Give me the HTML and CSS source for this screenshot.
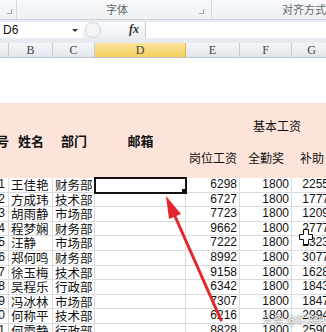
FILE: index.html
```html
<!DOCTYPE html>
<html lang="zh-CN">
<head>
    <meta charset="UTF-8">
    <title>工资表</title>
    <link rel="stylesheet" href="styles.css">
</head>
<body>
    <div class="ribbon">
        <div class="grp grp-clip"><span class="launch"></span></div>
        <div class="grp grp-font"><span class="grp-label">字体</span><span class="launch"></span></div>
        <div class="grp grp-align"><span class="grp-label">对齐方式</span></div>
    </div>

    <div class="fbar">
        <div class="namebox">D6<span class="drop"></span></div>
        <div class="fbtns"><span class="oval"></span><span class="fx">fx</span></div>
        <div class="finput"></div>
    </div>

    <div class="colhead">
        <div class="ch"></div>
        <div class="ch">B</div>
        <div class="ch">C</div>
        <div class="ch active">D</div>
        <div class="ch">E</div>
        <div class="ch">F</div>
        <div class="ch">G</div>
        <div class="ch">H</div>
    </div>

    <div class="sheet">
        <div class="title"></div>

        <div class="hd hd-a">序号</div>
        <div class="hd hd-b">姓名</div>
        <div class="hd hd-c">部门</div>
        <div class="hd hd-d">邮箱</div>
        <div class="hd-group">基本工资</div>
        <div class="hd-sub">岗位工资</div>
        <div class="hd-sub">全勤奖</div>
        <div class="hd-sub">补助</div>
        <div class="hd-sub"></div>

        <div class="c no">1</div><div class="c">王佳艳</div><div class="c">财务部</div><div class="c sel"></div><div class="c num">6298</div><div class="c num">1800</div><div class="c num">2255</div><div class="c"></div>
        <div class="c no">2</div><div class="c">方成玮</div><div class="c">技术部</div><div class="c"></div><div class="c num">6727</div><div class="c num">1800</div><div class="c num">1777</div><div class="c"></div>
        <div class="c no">3</div><div class="c">胡雨静</div><div class="c">市场部</div><div class="c"></div><div class="c num">7723</div><div class="c num">1800</div><div class="c num">1209</div><div class="c"></div>
        <div class="c no">4</div><div class="c">程梦娴</div><div class="c">财务部</div><div class="c"></div><div class="c num">9662</div><div class="c num">1800</div><div class="c num">2777</div><div class="c"></div>
        <div class="c no">5</div><div class="c">汪静</div><div class="c">市场部</div><div class="c"></div><div class="c num">7222</div><div class="c num">1800</div><div class="c num">2323</div><div class="c"></div>
        <div class="c no">6</div><div class="c">郑何鸣</div><div class="c">财务部</div><div class="c"></div><div class="c num">8992</div><div class="c num">1800</div><div class="c num">3077</div><div class="c"></div>
        <div class="c no">7</div><div class="c">徐玉梅</div><div class="c">技术部</div><div class="c"></div><div class="c num">9158</div><div class="c num">1800</div><div class="c num">1628</div><div class="c"></div>
        <div class="c no">8</div><div class="c">吴程乐</div><div class="c">行政部</div><div class="c"></div><div class="c num">6342</div><div class="c num">1800</div><div class="c num">1843</div><div class="c"></div>
        <div class="c no">9</div><div class="c">冯冰林</div><div class="c">市场部</div><div class="c"></div><div class="c num">7307</div><div class="c num">1800</div><div class="c num">1847</div><div class="c"></div>
        <div class="c no">10</div><div class="c">何称平</div><div class="c">技术部</div><div class="c"></div><div class="c num">6216</div><div class="c num">1800</div><div class="c num">2994</div><div class="c"></div>
        <div class="c no">11</div><div class="c">何霞静</div><div class="c">行政部</div><div class="c"></div><div class="c num">8828</div><div class="c num">1800</div><div class="c num">2590</div><div class="c"></div>
    </div>

    <!-- annotation drawn over the sheet -->
    <svg class="arrow" width="326" height="332" viewBox="0 0 326 332">
        <line x1="221" y1="320" x2="174" y2="214" stroke="#e3262a" stroke-width="3" stroke-linecap="round"/>
        <polygon points="166,196 181,214 169,219" fill="#e3262a"/>
    </svg>

    <svg class="cursor" width="14" height="16" viewBox="0 0 14 16">
        <path d="M4.5 0.5h5v5h4v5h-4v5h-5v-5h-4v-5h4z" fill="#fff" stroke="#111" stroke-width="1"/>
    </svg>

    <div class="watermark">头条 @烂鸽994</div>
</body>
</html>
```

FILE: styles.css
```css
* {
    margin: 0;
    padding: 0;
    box-sizing: border-box;
}

body {
    width: 326px;
    height: 332px;
    overflow: hidden;
    position: relative;
    background: #fff;
    font-family: "Liberation Sans", "Noto Sans CJK SC", sans-serif;
}

/* ribbon strip */
.ribbon {
    display: flex;
    height: 20px;
    background: linear-gradient(#f7f9fb, #eef1f5);
    border-bottom: 1px solid #c9d3de;
}

.grp {
    position: relative;
    height: 100%;
    border-right: 1px solid #d3dae3;
}

.grp-clip { width: 18px; }
.grp-font { width: 208px; }
.grp-align { flex: 1; border-right: none; }

.grp-label {
    display: block;
    font-size: 11px;
    line-height: 19px;
    color: #666;
    font-family: "Noto Sans CJK SC", sans-serif;
}

.grp-font .grp-label {
    padding-left: 89px;
}

.grp-align .grp-label {
    padding-left: 70px;
    white-space: nowrap;
}

.launch {
    position: absolute;
    top: 9px;
    right: 4px;
    width: 5px;
    height: 5px;
    border: 1px solid #9aa5b1;
    border-width: 0 1px 1px 0;
}

.grp-font .launch { right: 7px; }

/* formula bar */
.fbar {
    display: flex;
    height: 23px;
    padding: 2px 0 5px;
    background: #e6ebf1;
}

.namebox {
    position: relative;
    width: 83px;
    background: #fff;
    font-size: 12px;
    line-height: 16px;
    padding-left: 3px;
    color: #111;
}

.drop {
    position: absolute;
    top: 7px;
    right: 5px;
    border: 3px solid transparent;
    border-top: 3px solid #333;
    border-bottom: 0;
}

.fbtns {
    position: relative;
    width: 63px;
    background: linear-gradient(#fafbfc, #edf0f4);
    border-right: 1px solid #c5ccd5;
}

.oval {
    position: absolute;
    left: 2px;
    top: 0;
    width: 16px;
    height: 16px;
    border-radius: 8px;
    border: 1px solid #cfd5dc;
    background: #f2f4f6;
}

.fx {
    position: absolute;
    right: 6px;
    top: 0;
    font-family: "Liberation Serif", serif;
    font-style: italic;
    font-weight: bold;
    font-size: 12px;
    line-height: 15px;
    color: #333;
}

.finput {
    flex: 1;
    background: #fff;
}

/* column letters */
.colhead {
    display: grid;
    grid-template-columns: 9px 44px 42px 91px 54px 52px 40px 36px;
    height: 15px;
    background: linear-gradient(#f4f6f9, #e1e6ec);
    border-bottom: 1px solid #b9c5d3;
}

.ch {
    border-right: 1px solid #c3ccd7;
    font-family: "Liberation Serif", serif;
    font-size: 12px;
    line-height: 14px;
    text-align: center;
    color: #444;
    overflow: hidden;
}

.ch.active {
    background: linear-gradient(#fbe59c, #f5cf5c);
    border-right-color: #e2b44a;
}

/* worksheet */
.sheet {
    display: grid;
    grid-template-columns: 9px 44px 42px 91px 54px 52px 40px 36px;
    grid-template-rows: 45px 37px 38px repeat(11, 14.6px);
    font-size: 12.5px;
    color: #111;
    font-family: "Noto Sans CJK SC", sans-serif;
}

.title {
    grid-column: 1 / -1;
}

.hd, .hd-group, .hd-sub {
    background: #fce4da;
    display: flex;
    align-items: center;
    justify-content: center;
    white-space: nowrap;
    overflow: hidden;
}

.hd {
    grid-row: span 2;
    font-weight: bold;
    font-size: 13px;
}

.hd-a { justify-content: flex-end; }

.hd-group {
    grid-column: 5 / 9;
    font-size: 12px;
    padding-top: 8px;
}

.hd-sub {
    font-size: 12px;
    padding-bottom: 3px;
}

.c {
    border-right: 1px solid #d9dcdf;
    border-bottom: 1px solid #d9dcdf;
    line-height: 13.6px;
    padding: 0 2px;
    white-space: nowrap;
    overflow: hidden;
}

.c.no {
    font-family: "Liberation Sans", sans-serif;
    font-size: 12px;
    text-align: right;
    padding: 0 3px 0 0;
    direction: rtl;
}

.c.num {
    font-family: "Liberation Sans", sans-serif;
    font-size: 12px;
    text-align: right;
}

.c.sel {
    position: relative;
    outline: 2px solid #111;
    outline-offset: -1px;
}

.c.sel::after {
    content: "";
    position: absolute;
    right: -3px;
    bottom: -3px;
    width: 5px;
    height: 5px;
    background: #111;
    border: 1px solid #fff;
}

/* overlays */
.arrow {
    position: absolute;
    left: 0;
    top: 0;
}

.cursor {
    position: absolute;
    left: 299px;
    top: 229px;
}

.watermark {
    position: absolute;
    left: 262px;
    top: 311px;
    font-family: "Noto Sans CJK SC", sans-serif;
    font-size: 11px;
    color: rgba(255, 255, 255, 0.9);
    text-shadow: 0 0 2px rgba(0, 0, 0, 0.7);
    white-space: nowrap;
}
```
